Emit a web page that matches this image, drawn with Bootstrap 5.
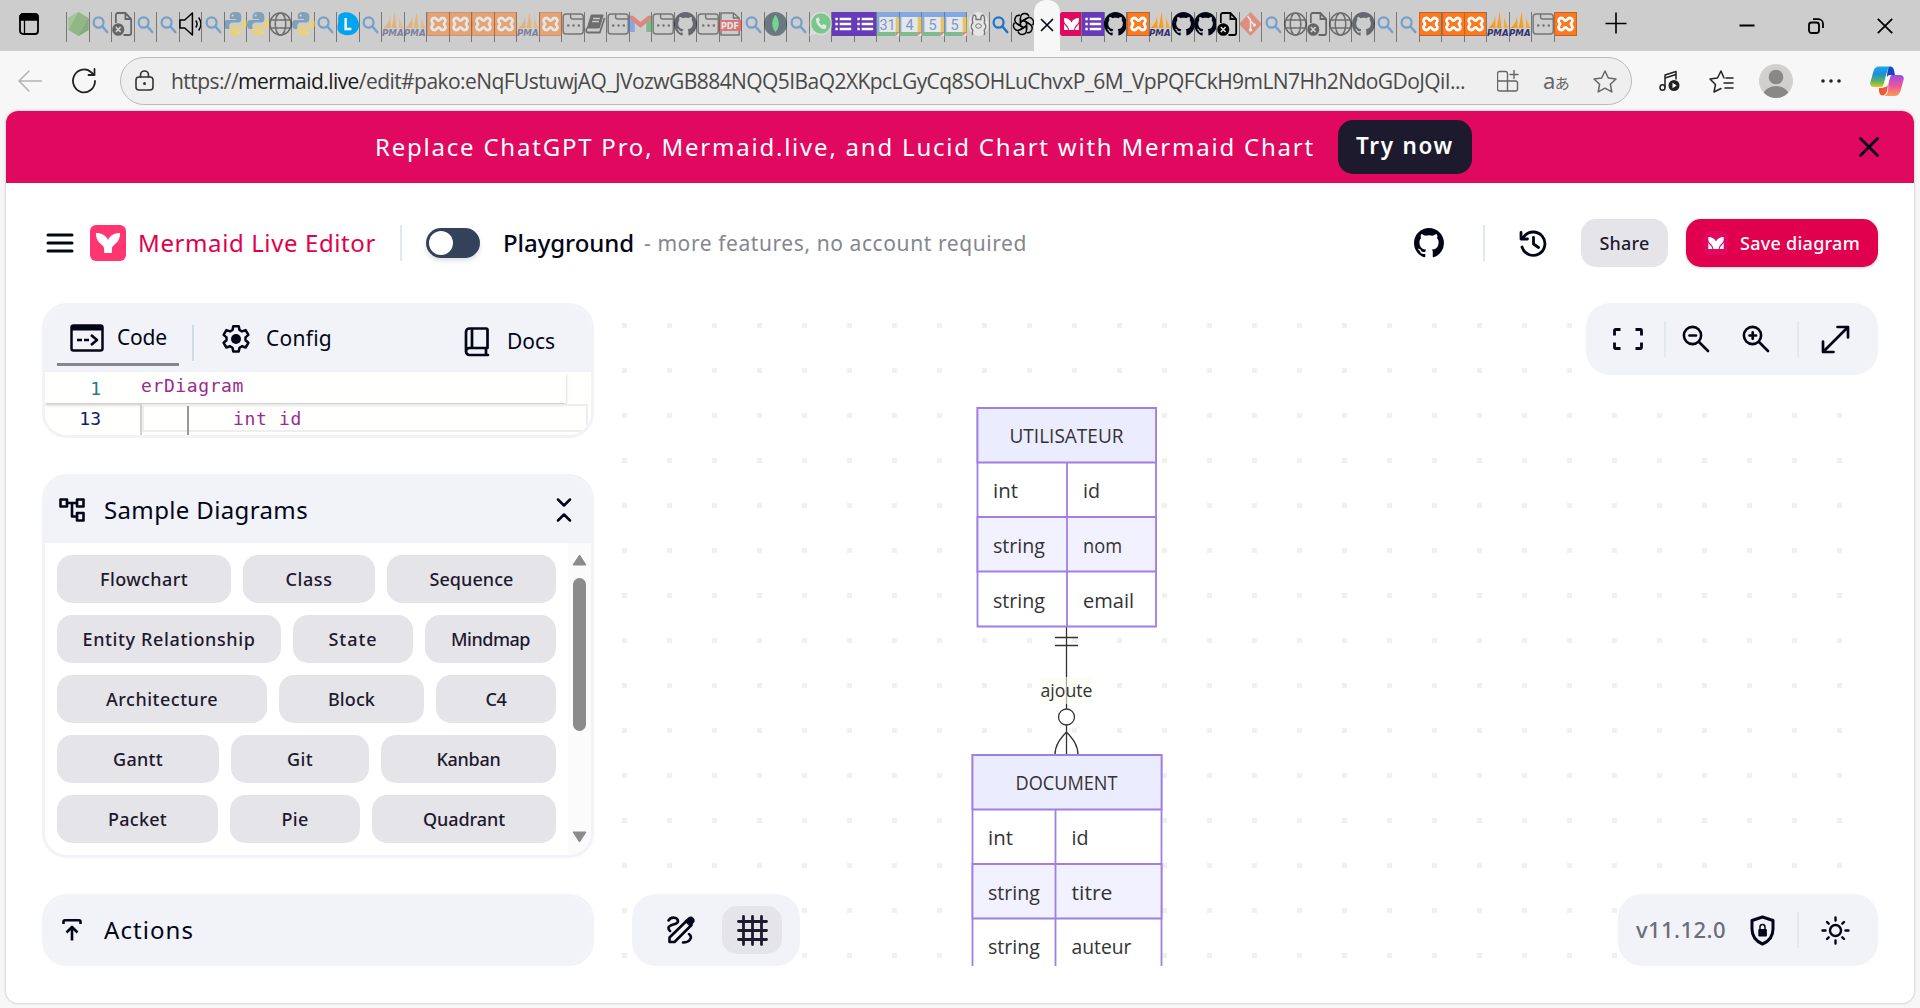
<!DOCTYPE html>
<html lang="en">
<head>
<meta charset="utf-8">
<meta name="viewport" content="width=device-width, initial-scale=1">
<title>Mermaid Live Editor</title>
<link href="https://cdn.jsdelivr.net/npm/bootstrap@5.3.0/dist/css/bootstrap.min.css" rel="stylesheet">
<style>
:root{--ink:#020617;--panel:#f1f3f8;--pink:#e0095f;--brand:#e0004d;--chip:#e5e4e9;--rule:#e2e8f0}
html,body{height:100%;overflow:hidden}
body{background:#f7f7f7;font-family:"Noto Sans",sans-serif;color:var(--ink);line-height:1}
svg{display:block;flex:none}
.ln{fill:none;stroke:currentColor;stroke-linecap:round;stroke-linejoin:round}
.fit{white-space:nowrap;display:inline-block}
.tabstrip{height:51px;background:#cdcdcd;padding-left:19px}
.tabset{height:30px;margin-top:12px}
.tabcell{width:22.5px;height:30px;border-left:1px solid #777;overflow:visible}
.tabcell svg{width:23px;height:24px;margin-left:-.5px}
.tabcell.bare{border-color:transparent;width:21.5px}
.faded{opacity:.5}
.live-tab{width:26px;height:51px;background:#f7f7f7;border-radius:12px 12px 0 0}
.urlrow{height:60px;padding-left:18px}
.urlbox{width:1512px;height:48px;margin-left:23px;border:1.5px solid #bbb;border-radius:24px;background:#efefef;padding:0 14px}
.urltext{font-family:"Open Sans",sans-serif;font-size:21px;color:#4a4a4a;margin-left:17px}
.urltext b{font-weight:400;color:#1b1b1b}
.sheet{width:1908px;height:892px;margin-left:6px;border-radius:12px;background:#fff;overflow:hidden;box-shadow:0 0 3px rgba(0,0,0,.28)}
.promo{height:72px;background:var(--pink);padding:0 35px 0 369px}
.promo-text{font-size:24px;color:#fff}
.promo-btn{width:134px;height:54px;border-radius:15px;background:#1e1a2e;color:#fff;font-size:22.500px;font-weight:600;margin-left:25px;padding-bottom:2px}
.topbar{height:120px;padding:0 36px 0 40px}
.brandname{font-size:24px;color:var(--brand);margin-left:12px}
.vrule{width:2px;height:36px;background:var(--rule)}
.switcher{width:54px;height:30px;border-radius:15px;background:#33425a;padding:3px;box-shadow:0 3px 5px rgba(0,0,0,.12)}
.switcher i{display:block;width:24px;height:24px;border-radius:50%;background:#fff}
.soft-btn{height:48px;border-radius:15px;background:var(--chip);color:#1e1a2e;font-size:18px;font-weight:500;padding-bottom:1px}
.save-btn{width:192px;background:var(--brand);color:#fff;box-shadow:0 1px 3px rgba(0,0,0,.2)}
.work{padding:0 36px;height:663px}
.side{width:552px}
.box{border:3px solid var(--panel);border-radius:25px;overflow:hidden;background:#fff}
.boxhead{background:var(--panel);height:66px}
.tabtext{font-size:21px}
.headtext{font-size:24px}
.code{font-family:"DejaVu Sans Mono","Liberation Mono",monospace;font-size:18px;color:#9c2a8f;background:#fffffd}
.code-sticky{height:31px;box-shadow:0 2px 3px rgba(0,0,0,.22);width:521px}
.num{width:56px;text-align:right;color:#237893}
.cur{height:32px}
.guide{width:2px;background:#d0d0d0;height:32px}
.curbox{border:2px solid #eee;height:28px;width:446px;margin:1px 3px 0 0}
.chips{width:529px;padding:12px}
.chips .soft-btn{flex:none}
.sbar{width:23px;background:#fbfbfb;padding:11px 0 12px}
.thumb{width:13px;height:153px;border-radius:7px;background:#8b8b8b;margin-top:12px}
.canvas{width:1272px;height:663px;margin-left:12px;position:relative;overflow:hidden}
.float-tools{position:absolute;height:72px;border-radius:24px;background:var(--panel)}
.ft-tr{top:0;right:0;width:292px;padding:0 28px 0 27px}
.ft-bl{bottom:0;left:26px;width:168px;padding:0 18px 0 18px}
.ft-br{bottom:0;right:0;width:260px;padding:0 28px 0 18px}
.pressed{width:60px;height:48px;border-radius:15px;background:var(--chip);color:#1e1a2e}
.version{font-size:22px;font-weight:500;color:#6b6d79;padding-bottom:2px}
.er text{font-family:"Open Sans",sans-serif;font-size:19.5px;fill:#333}
</style>
<script src="https://cdn.jsdelivr.net/npm/bootstrap@5.3.0/dist/js/bootstrap.bundle.min.js"></script>
</head>
<body>
<svg class="d-none">
<symbol id="node" viewBox="0 0 24 24"><path d="M12 0 22.500 6v12L12 24 1.500 18V6Z" fill="#5aa047"/><path d="M12 0 1.500 6v12Z" fill="#7cbf5c"/><path d="m22.500 6-10.500 18 10.500-6Z" fill="#3d8a3a"/></symbol>
<symbol id="find" viewBox="0 0 24 24"><circle cx="10" cy="10.500" r="5.200" fill="none" stroke="#1b74cc" stroke-width="2.300"/><path d="m14 14.500 5 5.500" stroke="#1b74cc" stroke-width="2.600" stroke-linecap="round"/></symbol>
<symbol id="docx" viewBox="0 0 24 24"><path d="M4 11V3a2 2 0 0 1 2-2h8l6 6v14a2 2 0 0 1-2 2h-6M14 1v6h6" fill="none" stroke="#000" stroke-width="1.800"/><circle cx="6.500" cy="17.500" r="6.300" fill="#000"/><path d="m4 15 5 5m0-5-5 5" stroke="#ddd" stroke-width="1.700"/></symbol>
<symbol id="speaker" viewBox="0 0 24 24"><path d="M1 8v8h5l8 7V1L6 8Z" fill="none" stroke="#000" stroke-width="1.600" stroke-linejoin="round"/><path d="M17.500 8.500c1.500 2 1.500 5 0 7M20.500 5.500c3 4 3 9 0 13" fill="none" stroke="#000" stroke-width="1.500"/></symbol>
<symbol id="python" viewBox="0 0 24 24"><path d="M12 0C7 0 6 2 6 4v3h6.500v1H3C1 8 0 10 0 12.500S1 17 3 17h2.500v-3c0-2 1.500-3.500 3.500-3.500h6c2 0 3-1.500 3-3V4c0-2.500-2-4-6-4Z" fill="#3776ab"/><path d="M12.500 24c5 0 6-2 6-4v-3H12v-1h9.500c2 0 2.500-2 2.500-4.500S23 7 21 7h-2v3.500c0 2-1.500 3.500-3.500 3.500H9c-2 0-3 1.500-3 3V20c0 2.500 2 4 6.500 4Z" fill="#ffd43b"/><circle cx="9" cy="3.500" r="1.100" fill="#ddd"/><circle cx="15.500" cy="20.500" r="1.100" fill="#ddd"/></symbol>
<symbol id="globe" viewBox="0 0 24 24"><g fill="none" stroke="#111" stroke-width="1.600"><circle cx="12" cy="12" r="11"/><ellipse cx="12" cy="12" rx="5.500" ry="11"/><path d="M2 8h20M2 16h20"/></g></symbol>
<symbol id="ell" viewBox="0 0 24 24"><path d="M3 2C8-1 16 0 20 5s4 11 0 15-10 4-15 2-5-6-4-10S0 4 3 2Z" fill="#00a4ef"/><path d="M9 6v11h6" fill="none" stroke="#fff" stroke-width="2.500"/></symbol>
<symbol id="pma" viewBox="0 0 24 24"><path d="M8.500 4C8 9 5.500 13 1.500 16H9ZM13 0c-1 6-1.500 11-3 16h5Z" fill="#f89c1c"/><path d="M14 1c1 5 1 10 1.500 15h2L18 5c1 4 2.500 8 4.500 11h-7" fill="#fba93a"/><text x="0" y="23.500" font-family="DejaVu Sans" font-size="9" font-weight="bold" font-style="italic" fill="#33306e" textLength="22.500" lengthAdjust="spacingAndGlyphs">PMA</text></symbol>
<symbol id="xampp" viewBox="0 0 24 24"><rect width="24" height="24" rx="1" fill="#f97a20"/><rect width="24" height="24" rx="1" fill="none" stroke="#b95a18" stroke-width="1.400"/><path d="M8 6C5 6 3.800 8.500 5.500 10.500c1 1 1 2 0 3C3.800 15.500 5 18 8 18c2.200 0 2-2.500 4-2.500s1.800 2.500 4 2.500c3 0 4.200-2.500 2.500-4.500-1-1-1-2 0-3C20.200 8.500 19 6 16 6c-2.200 0-2 2.500-4 2.500S10.200 6 8 6Z" fill="none" stroke="#fff" stroke-width="2.800"/></symbol>
<symbol id="page" viewBox="0 0 24 24"><rect x="1.200" y="2" width="21" height="20" rx="3" fill="none" stroke="#222" stroke-width="1.500"/><path d="M9 2v3c0 1.500 1 2 2 2h11" fill="none" stroke="#222" stroke-width="1.500"/><path d="M6.500 13.500h.1M12 13.500h.1M17.500 13.500h.1" stroke="#222" stroke-width="2.600" stroke-linecap="round"/></symbol>
<symbol id="book" viewBox="0 0 24 24"><path d="M7.500 3H20l-4 13H3.500Z" fill="#111" stroke="#111" stroke-linejoin="round"/><path d="M9.500 6.500h7M8.500 9.500h7" stroke="#ccc" stroke-width="1.300"/><path d="M3.500 16c-2 1-1.500 4.500.5 4.500h12.500L21.500 6" fill="none" stroke="#111" stroke-width="1.800"/></symbol>
<symbol id="gmail" viewBox="0 0 24 24"><path d="M0 6v14h6V10Z" fill="#4285f4"/><path d="M24 6v14h-6V10Z" fill="#34a853"/><path d="M0 6c0-3 3-3 4.500-2L12 10l7.500-6c2-1.500 4.500 0 4.500 2l-12 10Z" fill="#ea4335"/></symbol>
<symbol id="gh" viewBox="0 0 16 16"><path fill="currentColor" d="M8 0C3.580 0 0 3.580 0 8c0 3.540 2.290 6.530 5.470 7.590.4.070.55-.17.55-.38 0-.19-.01-.82-.01-1.490-2.010.37-2.530-.49-2.690-.94-.09-.23-.48-.94-.82-1.130-.28-.15-.68-.52-.01-.53.63-.01 1.080.58 1.230.82.72 1.210 1.870.87 2.330.66.07-.52.28-.87.51-1.070-1.780-.2-3.640-.89-3.640-3.950 0-.87.31-1.590.82-2.150-.08-.2-.36-1.020.08-2.120 0 0 .67-.21 2.200.82.64-.18 1.320-.27 2-.27s1.360.09 2 .27c1.530-1.040 2.200-.82 2.200-.82.44 1.100.16 1.920.08 2.120.51.56.82 1.270.82 2.150 0 3.070-1.870 3.750-3.650 3.950.29.25.54.73.54 1.480 0 1.070-.01 1.930-.01 2.200 0 .21.15.46.55.38A8.010 8.010 0 0 0 16 8c0-4.420-3.580-8-8-8Z"/></symbol>
<symbol id="pdf" viewBox="0 0 24 24"><path d="M2 8V1h13l6 5v2M15 1v5h6M2 19v4h19v-4" fill="none" stroke="#222" stroke-width="1.500"/><rect y="8" width="24" height="11" fill="#e5252a"/><text x="2" y="17" font-family="DejaVu Sans" font-size="9" font-weight="bold" fill="#fff" textLength="19" lengthAdjust="spacingAndGlyphs">PDF</text></symbol>
<symbol id="mongo" viewBox="0 0 24 24"><circle cx="12" cy="12" r="12" fill="#0c2733"/><path d="M12 3c5 6 4 13 0 17-4-4-5-11 0-17Z" fill="#13e25b"/></symbol>
<symbol id="wapp" viewBox="0 0 24 24"><circle cx="12.500" cy="11.500" r="11" fill="#25c44d" stroke="#eee" stroke-width="1.500"/><path d="m0 24 2-7 5 5Z" fill="#eee"/><path d="M8 6c-3 4 4 12 9 11l1.500-3-3-2-2 1.500-3.500-3.500L11.500 8 10 5.500Z" fill="#fff"/></symbol>
<symbol id="forms" viewBox="0 0 24 24"><rect width="24" height="24" fill="#673ab7"/><path d="M3.500 7h2.500M3.500 12h2.500M3.500 17h2.500M8 7h12M8 12h12M8 17h12" stroke="#fff" stroke-width="2.500"/></symbol>
<symbol id="cal" viewBox="0 0 24 24"><rect width="24" height="24" fill="#fff"/><path d="M0 0h24v5H0Z" fill="#4285f4"/><path d="M0 5h2.500v15H0Z" fill="#4285f4"/><path d="M19.500 5H24v15h-4.500Z" fill="#fbbc04"/><path d="M0 20h19.500v4H0Z" fill="#34a853"/><path d="M19.500 20H24l-4.500 4Z" fill="#ea4335"/></symbol>
<symbol id="llama" viewBox="0 0 24 24"><rect x="2" y="0" width="20" height="24" rx="10" fill="#fff"/><path d="M6 23c-1-3 0-4 0-5-2-2-2-5 0-7-1-4 0-8 1.500-8S9.500 6 9.500 7.500h5C14.500 6 15 3 16.500 3S19 7 18 11c2 2 2 5 0 7 0 1 1 2 0 5" fill="none" stroke="#222" stroke-width="1.500"/><ellipse cx="12" cy="14" rx="3" ry="2.200" fill="none" stroke="#222"/></symbol>
<symbol id="ai" viewBox="0 0 24 24"><g fill="none" stroke="#000" stroke-width="1.500"><path id="lp" d="M8.800 13.500V6.500c0-6 7.200-6.500 9-2M8.800 10.200l6.500-3.800"/><use href="#lp" transform="rotate(60 12 12)"/><use href="#lp" transform="rotate(120 12 12)"/><use href="#lp" transform="rotate(180 12 12)"/><use href="#lp" transform="rotate(240 12 12)"/><use href="#lp" transform="rotate(300 12 12)"/></g></symbol>
<symbol id="mchart" viewBox="0 0 24 24"><path d="M4.300 6c3.500 0 6.500 1.700 7.700 4.500C13.200 7.700 16.200 6 19.700 6v12H4.300Z" fill="#fff"/><path d="M3.800 9.500c.8 4.200 5.200 3.500 5.200 9M20.200 9.500c-.8 4.200-5.200 3.500-5.200 9" fill="none" stroke="#e0095f" stroke-width="1.200"/></symbol>
<symbol id="mtab" viewBox="0 0 24 24"><rect width="24" height="24" rx="3" fill="#e0095f"/><use href="#mchart"/></symbol>
<symbol id="git" viewBox="0 0 24 24"><path d="m12 0 12 12-12 12L0 12Z" fill="#f05033"/><path d="m9 4 3 4v10M12 9l4 4" fill="none" stroke="#fff" stroke-width="1.700"/><circle cx="12" cy="18" r="1.800" fill="#fff"/><circle cx="16" cy="13" r="1.800" fill="#fff"/></symbol>
</svg>

<header class="tabstrip d-flex align-items-start">
  <svg width="20" height="22" viewBox="0 0 20 22" style="margin-top:13px"><rect x="1" y="1" width="18" height="20" rx="3" fill="none" stroke="#000" stroke-width="1.800"/><path d="M1 3.500A2.500 2.500 0 0 1 3.500 1h13A2.500 2.500 0 0 1 19 3.500V7H1ZM5.500 7v14" stroke="#000" stroke-width="1.300"/></svg>
  <div class="tabset d-flex" id="tabsA" style="margin-left:27px"></div>
  <div class="live-tab d-flex justify-content-center"><svg width="14" height="14" viewBox="0 0 14 14" style="margin-top:18px"><path class="ln" d="m1.500 1.500 11 11m0-11-11 11" stroke-width="1.700"/></svg></div>
  <div class="tabset d-flex" id="tabsB"></div>
  <svg width="22" height="22" viewBox="0 0 22 22" style="margin:12px 0 0 29px"><path d="M11 .5v21M.5 11.500h21" stroke="#000" stroke-width="1.600"/></svg>
  <div class="ms-auto d-flex" style="margin:18px 27px 0 0;gap:53px">
    <svg width="16" height="16"><path d="M.5 7.500h15" stroke="#000" stroke-width="2"/></svg>
    <svg width="16" height="16" viewBox="0 0 16 16" fill="none" stroke="#000" stroke-width="1.800"><rect x="1" y="4.500" width="10" height="10.500" rx="2.500"/><path d="M5 1.200h5.500a4.500 4.500 0 0 1 4.500 4.500V10"/></svg>
    <svg width="16" height="16" viewBox="0 0 16 16"><path d="m.8.800 14.400 14.400M15.200.8.800 15.200" stroke="#000" stroke-width="1.800"/></svg>
  </div>
</header>

<div class="urlrow d-flex align-items-center">
  <svg width="24" height="22" viewBox="0 0 24 22" style="color:#b4b4b4"><path class="ln" d="M23.500 11H1M11 1 1 11l10 10" stroke-width="1.500"/></svg>
  <svg width="26" height="26" viewBox="0 0 26 26" style="color:#222;margin-left:29px"><path class="ln" d="M24 13a11 11.500 0 1 1-3.500-8.500L23 7M23.500 1v6h-6" stroke-width="1.800"/></svg>
  <div class="urlbox d-flex align-items-center">
    <svg width="19" height="21" viewBox="0 0 19 21" style="color:#333;margin-top:-2px"><rect class="ln" x="1" y="7" width="17" height="13" rx="3" stroke-width="1.600"/><path class="ln" d="M5.500 7V5a4 4 0 0 1 8 0v2" stroke-width="1.600"/><circle cx="9.500" cy="13.500" r="1.500" fill="currentColor"/></svg>
    <span class="urltext fit" data-w="1294">https://<b>mermaid.live</b>/edit#pako:eNqFUstuwjAQ_JVozwGB884NQQ5IBaQ2XKpcLGyCq8SOHLuChvxP_6M_VpPQFCkH9mLN7Hh2NdoGDoJQiI...</span>
    <div class="ms-auto d-flex align-items-center" style="color:#666;gap:24px">
      <svg width="22" height="22" viewBox="0 0 22 22"><path class="ln" d="M10.500 21V3.500a2 2 0 0 0-2-2h-6a2 2 0 0 0-2 2V19a2 2 0 0 0 2 2h16a2 2 0 0 0 2-2v-6a2 2 0 0 0-2-2H.5M17 .5v8M13 4.500h8" stroke-width="1.400"/></svg>
      <span style="font:22px/1 'Noto Sans','Noto Sans CJK JP',sans-serif;letter-spacing:-.5px;width:26px;white-space:nowrap;padding-bottom:3px">a<small style="font-size:15px">あ</small></span>
      <svg width="24" height="23" viewBox="0 0 24 23"><path class="ln" d="m12 1 3.300 7 7.700 1-5.600 5.300 1.400 7.600L12 18.200l-6.800 3.700 1.400-7.600L1 9l7.700-1Z" stroke-width="1.500"/></svg>
    </div>
  </div>
  <div class="d-flex align-items-center flex-grow-1" style="padding-left:27px;color:#222">
    <svg width="22" height="22" viewBox="0 0 22 22"><path class="ln" d="M6 17V5l11-3.500V9M6 8l11-3.500" stroke-width="1.500"/><ellipse class="ln" cx="3.500" cy="17.500" rx="2.500" ry="2.800" stroke-width="1.500"/><circle cx="15" cy="15.500" r="5.500" fill="currentColor"/><path d="M13.500 12.800v5.400l4.200-2.700Z" fill="#fff"/></svg>
    <svg width="25" height="23" viewBox="0 0 25 23" style="margin-left:28px"><path class="ln" d="M15 8 12 1 8.500 8 1 9l5.500 5.500L5 22l7-3.500M17 8h7M15 13h9M16 18h8" stroke-width="1.500"/></svg>
    <svg width="34" height="34" viewBox="0 0 34 34" style="margin-left:25px"><defs><clipPath id="av"><circle cx="17" cy="17" r="17"/></clipPath></defs><g clip-path="url(#av)"><path fill="#d2d0ce" d="M0 0h34v34H0z"/><circle cx="17" cy="13" r="7.300" fill="#8a8886"/><ellipse cx="17" cy="32" rx="13" ry="10" fill="#8a8886"/></g></svg>
    <svg width="20" height="6" viewBox="0 0 20 6" style="margin-left:28px"><path d="M2 3h.01M10 3h.01M18 3h.01" stroke="#222" stroke-width="3.600" stroke-linecap="round"/></svg>
    <svg width="34" height="31" viewBox="0 0 34 31" style="margin-left:29px"><defs><linearGradient id="c1" x2="0" y2="1"><stop stop-color="#1ba7e8"/><stop offset=".35" stop-color="#1c8fd8"/><stop offset=".7" stop-color="#58b560"/><stop offset="1" stop-color="#f5c518"/></linearGradient><linearGradient id="c2" x2="0" y2="1"><stop stop-color="#a04bea"/><stop offset=".5" stop-color="#e8559f"/><stop offset="1" stop-color="#ff9a52"/></linearGradient></defs><path d="M19 9h11c3 0 4.500 2 3.500 5l-3 11c-1 3-3 5-6 5H13c3 0 4-2 5-5Z" fill="url(#c2)"/><path d="M15 21H4c-3 0-4.500-2-3.500-5l3-11C4.500 2 6 .5 9 .5h13c-3 0-4 2-5 5l-3.500 13c-.5 2-2 3-3.500 3" fill="url(#c1)"/><path d="M9 22h4l5-3-1 6c-1.500 5-7 7-8 0Z" fill="#ee5a35"/><path d="M20 .5c4 0 4 4 5 8.500h-4c-3 0-3 1-4 3 0-6 1-10.500 3-11.500Z" fill="#1746c5"/><path d="m14 21 3-9c1-3 2-3 4-3l-3 9c-1 3-2 3-4 3Z" fill="#fff"/></svg>
  </div>
</div>

<main class="sheet">
  <div class="promo d-flex align-items-center">
    <span class="promo-text fit" data-w="940">Replace ChatGPT Pro, Mermaid.live, and Lucid Chart with Mermaid Chart</span>
    <a class="promo-btn d-flex align-items-center justify-content-center text-decoration-none" style="margin-left:23px"><span class="fit" data-w="98">Try now</span></a>
    <svg class="ms-auto" width="20" height="20" viewBox="0 0 20 20"><path class="ln" d="m1.500 1.500 17 17m0-17-17 17" stroke-width="2.800"/></svg>
  </div>

  <nav class="topbar d-flex align-items-center">
    <svg width="28" height="20" viewBox="0 0 28 20"><path class="ln" d="M2 2h24M2 10h24M2 18h24" stroke-width="3"/></svg>
    <svg width="36" height="36" viewBox="0 0 24 24" style="margin-left:16px"><rect width="24" height="24" rx="4" fill="#ff3670"/><path d="M4 5.400c4 0 7 1.800 8 4.800 1-3 4-4.800 8-4.800.1 3-1 6-3.800 7.800-1.100.8-1.600 1.600-1.600 2.900v2.500H9.400v-2.500c0-1.300-.5-2.100-1.600-2.900C5 11.400 3.900 8.400 4 5.400Z" fill="#fff"/></svg>
    <span class="brandname fit" data-w="238">Mermaid Live Editor</span>
    <div class="vrule" style="margin:0 24px 0 24px"></div>
    <div class="switcher"><i></i></div>
    <span class="headtext fit" data-w="131" style="margin-left:23px;font-weight:500;padding-bottom:1px">Playground</span>
    <span class="fit" data-w="383" style="font-size:21px;color:#85868f;margin-left:10px">- more features, no account required</span>
    <svg width="30" height="30" class="ms-auto"><use href="#gh"/></svg>
    <div class="vrule" style="margin:0 34px 0 39px"></div>
    <svg width="29" height="29" viewBox="0 0 29 29"><path class="ln" d="M3 18a11.700 11.700 0 1 0 2-10.500L2.500 10M2 3.500V10h6.500M14.500 8.500v6.500l5 3.500" stroke-width="2.800" stroke-linecap="butt"/></svg>
    <a class="soft-btn d-flex align-items-center justify-content-center text-decoration-none" style="width:87px;margin:0 18px 0 33px"><span class="fit" data-w="50">Share</span></a>
    <a class="soft-btn save-btn d-flex align-items-center text-decoration-none" style="padding-left:18px;gap:12px"><svg width="24" height="24"><rect width="24" height="24" rx="5" fill="#e0095f"/><use href="#mchart"/></svg><span class="fit" data-w="120">Save diagram</span></a>
  </nav>

  <div class="work d-flex">
    <aside class="side d-flex flex-column">
      <section class="box" style="height:135px">
        <div class="boxhead d-flex align-items-start">
          <div class="d-flex" style="width:122px;height:60px;margin-left:12px;border-bottom:3px solid #85868f;padding:18px 0 0 13px">
            <svg width="34" height="28" viewBox="0 0 34 28"><rect class="ln" x="1.500" y="1.500" width="31" height="25" rx="2" stroke-width="2.500"/><path d="M1 1h32v5.500H1Z" fill="currentColor"/><path class="ln" d="M7 16h5M14 16h5M21 11l6 5-6 5" stroke-width="2.600" style="stroke-linecap:butt"/></svg>
            <span class="tabtext fit" data-w="50" style="margin:3px 0 0 13px">Code</span>
          </div>
          <div class="vrule" style="margin:19px 0 0 13px;background:#cfdce8"></div>
          <svg width="30" height="30" viewBox="0 0 24 24" style="margin:18px 0 0 27px"><path class="ln" d="M9.800 1.500h4.400l.6 3 2 1.100 2.900-1 2.200 3.800-2.300 2v2.300l2.300 2-2.200 3.800-2.900-1-2 1.200-.6 3H9.800l-.6-3-2-1.200-2.900 1-2.200-3.800 2.300-2v-2.300l-2.300-2 2.200-3.800 2.900 1 2-1.100Z" transform="translate(0 .3)" stroke-width="2"/><circle cx="12" cy="12" r="4" fill="currentColor"/></svg>
          <span class="tabtext fit" data-w="66" style="margin:22px 0 0 15px">Config</span>
          <svg width="26" height="30" viewBox="0 0 26 30" style="margin:21px 0 0 132px"><path class="ln" d="M24 28H5.500A3.500 3.500 0 0 1 2 24.500V5a3.500 3.500 0 0 1 3.500-3.500H22A1.500 1.500 0 0 1 23.500 3v18H5.500A3.500 3.500 0 0 0 2 24.500M8 1.500V21M22 21.500V28" stroke-width="2.700"/></svg>
          <span class="tabtext fit" data-w="48" style="margin:25px 0 0 17px">Docs</span>
        </div>
        <div class="code">
          <div class="code-sticky d-flex align-items-start"><span class="num" style="padding-top:8px">1</span><span class="fit" data-w="103" style="margin:5px 0 0 40px">erDiagram</span></div>
          <div class="cur d-flex"><span class="num" style="color:#0b216f;padding-top:7px">13</span><div class="guide" style="margin-left:39px"></div><div class="curbox d-flex"><div class="guide" style="background:#999;margin-left:43px;flex:none"></div><span class="fit" data-w="69" style="margin:4px 0 0 44px">int id</span></div></div>
        </div>
      </section>

      <section class="box" style="height:384px;margin-top:36px">
        <div class="boxhead d-flex align-items-center" style="padding:0 19px 0 14px">
          <svg width="26" height="24" viewBox="0 0 26 24"><g class="ln" stroke-width="2.600"><rect x="1.500" y="1.500" width="6.500" height="7"/><rect x="18" y="1.500" width="6.500" height="7"/><rect x="18" y="15" width="6.500" height="7.500"/><path d="M8 5h10M13 5v13.500h5"/></g></svg>
          <span class="headtext fit" data-w="204" style="margin-left:19px;padding-bottom:1px">Sample Diagrams</span>
          <svg class="ms-auto" width="16" height="24" viewBox="0 0 16 24"><path class="ln" d="m2 1.500 6 6 6-6M2 22.500l6-6 6 6" stroke-width="2.500"/></svg>
        </div>
        <div class="d-flex" style="height:312px">
          <div class="chips d-flex flex-wrap align-content-start" id="chips" style="gap:12px"></div>
          <div class="sbar d-flex flex-column align-items-center">
            <svg width="15" height="12"><path d="M7.500 1 14 11H1Z" fill="#8b8b8b" stroke="#8b8b8b" stroke-linejoin="round"/></svg>
            <div class="thumb"></div>
            <svg class="mt-auto" width="15" height="12"><path d="M7.500 11 14 1H1Z" fill="#8b8b8b" stroke="#8b8b8b" stroke-linejoin="round"/></svg>
          </div>
        </div>
      </section>

      <section class="box" style="height:72px;margin-top:36px">
        <div class="boxhead d-flex align-items-center" style="padding-left:17px">
          <svg width="20" height="24" viewBox="0 0 20 24"><path class="ln" d="M1.500 6V3.500a1.200 1.200 0 0 1 1.200-1.200h14.600a1.200 1.200 0 0 1 1.200 1.200V6M10 22.500V9.500M4.500 14.500 10 9l5.500 5.500" stroke-width="2.600" style="stroke-linecap:butt"/></svg>
          <span class="headtext fit" data-w="90" style="margin-left:22px;padding-bottom:1px">Actions</span>
        </div>
      </section>
    </aside>

    <section class="canvas">
      <!-- viewBox is the canvas area of the page -->
      <svg class="er" width="1272" height="663" viewBox="606 303 1272 663">
        <defs><pattern id="dots" x="622" y="323" width="45" height="45" patternUnits="userSpaceOnUse"><rect width="5" height="5" fill="#f0f0f0"/></pattern></defs>
        <rect x="606" y="303" width="1272" height="663" fill="url(#dots)"/>
        <g stroke="#333" stroke-width="1.300" fill="none"><path d="M1066.500 626v83M1066.500 725v30M1055 637.500h23M1055 645.500h23M1055 755c0-10 5-16 11.500-23 6.500 7 11.500 13 11.500 23"/><circle cx="1066.500" cy="717" r="8" fill="#fff"/></g>
        <rect x="1040" y="677" width="52" height="27" fill="#fbfff2" opacity=".6"/>
        <text x="1040.500" y="697" textLength="52" lengthAdjust="spacingAndGlyphs" style="font-size:17.500px">ajoute</text>
        <g stroke="#9f7fe3" stroke-width="1.800">
          <path fill="#fff" d="M977.500 408h178.500v218.500H977.500Z"/><path fill="#ececff" d="M977.500 408h178.500v54.500H977.500Z"/><path fill="#f2f1ff" d="M977.500 517h178.500v54.500H977.500Z"/><path d="M1067 462v164"/>
          <path fill="#fff" d="M972.500 755h189v230h-189Z"/><path fill="#ececff" d="M972.500 755h189v54.500h-189Z"/><path fill="#f2f1ff" d="M972.500 864h189v54.500h-189Z"/><path d="M1055.500 809.500V990"/>
        </g>
        <g>
          <text x="1009.500" y="443" textLength="114" lengthAdjust="spacingAndGlyphs">UTILISATEUR</text>
          <text x="993" y="498" textLength="25" lengthAdjust="spacingAndGlyphs">int</text><text x="1083" y="498" textLength="17" lengthAdjust="spacingAndGlyphs">id</text>
          <text x="993" y="552.500" textLength="52" lengthAdjust="spacingAndGlyphs">string</text><text x="1083" y="552.500" textLength="39" lengthAdjust="spacingAndGlyphs">nom</text>
          <text x="993" y="607.500" textLength="52" lengthAdjust="spacingAndGlyphs">string</text><text x="1083" y="607.500" textLength="51" lengthAdjust="spacingAndGlyphs">email</text>
          <text x="1015.500" y="790" textLength="102" lengthAdjust="spacingAndGlyphs">DOCUMENT</text>
          <text x="988" y="844.500" textLength="25" lengthAdjust="spacingAndGlyphs">int</text><text x="1071.500" y="844.500" textLength="17" lengthAdjust="spacingAndGlyphs">id</text>
          <text x="988" y="899.500" textLength="52" lengthAdjust="spacingAndGlyphs">string</text><text x="1071.500" y="899.500" textLength="41" lengthAdjust="spacingAndGlyphs">titre</text>
          <text x="988" y="953.500" textLength="52" lengthAdjust="spacingAndGlyphs">string</text><text x="1071.500" y="953.500" textLength="60" lengthAdjust="spacingAndGlyphs">auteur</text>
        </g>
      </svg>
      <div class="float-tools ft-tr d-flex align-items-center">
        <svg width="30" height="22" viewBox="0 0 30 22"><path class="ln" d="M1.500 7.500v-5a1 1 0 0 1 1-1h5M22.500 1.500h5a1 1 0 0 1 1 1v5M28.500 14.500v5a1 1 0 0 1-1 1h-5M7.500 20.500h-5a1 1 0 0 1-1-1v-5" stroke-width="2.800" style="stroke-linecap:butt"/></svg>
        <div class="vrule" style="margin:0 16px 0 21px"></div>
        <svg width="28" height="28" viewBox="0 0 28 28"><circle class="ln" cx="10.500" cy="10.500" r="8.600" stroke-width="2.600"/><path class="ln" d="m17 17 9 9M7.500 10.500h6.500" stroke-width="2.700"/></svg>
        <svg width="28" height="28" viewBox="0 0 28 28" style="margin-left:32px"><circle class="ln" cx="10.500" cy="10.500" r="8.600" stroke-width="2.600"/><path class="ln" d="m17 17 9 9M7.500 10.500h6.500M10.700 7.300v6.500" stroke-width="2.700"/></svg>
        <div class="vrule ms-auto" style="margin-right:22px"></div>
        <svg width="29" height="29" viewBox="0 0 29 29"><path class="ln" d="M2 27 27 2M16.500 2H27v10.500M2 16.500V27h10.500" stroke-width="2.700"/></svg>
      </div>
      <div class="float-tools ft-bl d-flex align-items-center justify-content-between">
        <svg width="29" height="28" viewBox="0 0 29 28" style="margin-left:17px"><path class="ln" d="M2.500 26v-4.500L20 4.500l4.500 4.500L7.500 26Z" stroke-width="2.600"/><path d="m17.500 5 4-3.700c3-2.500 8 2.200 5.500 5.200L23 11Z" fill="currentColor"/><path class="ln" d="M1.500 4.500C4 .5 10.500.8 11 5c.3 4-8.500 3-9.500 6.500-.2 1.500.3 2.500 1.500 3.500M22 18c4 3 1 8.500-6 8.500" stroke-width="2.600"/></svg>
        <div class="pressed d-flex align-items-center justify-content-center"><svg width="31" height="31" viewBox="0 0 31 31"><path class="ln" d="M6.500 1.500v28M15.500 1.500v28M24.500 1.500v28M1.500 6.500h28M1.500 15.500h28M1.500 24.500h28" stroke-width="2.800"/></svg></div>
      </div>
      <div class="float-tools ft-br d-flex align-items-center">
        <span class="version fit" data-w="90">v11.12.0</span>
        <svg width="25" height="31" viewBox="0 0 25 31" style="margin-left:24px"><path class="ln" d="M12.500 2 2 5.500v8.500c0 7.500 4.500 12.500 10.500 15 6-2.500 10.500-7.500 10.500-15V5.500Z" stroke-width="3"/><rect x="8.300" y="14" width="8.600" height="7.500" rx="1" fill="currentColor"/><path class="ln" d="M10 14v-2a2.500 2.500 0 0 1 5 0v2" stroke-width="1.500"/></svg>
        <div class="vrule ms-auto" style="margin-right:22px"></div>
        <svg width="29" height="29" viewBox="0 0 29 29"><circle class="ln" cx="14.500" cy="14.500" r="5.500" stroke-width="2.400"/><path class="ln" d="M14.500 1.500v3M14.500 24.500v3M1.500 14.500h3M24.500 14.500h3M6 6l1.700 1.700M21.300 21.300 23 23M6 23l1.700-1.700M21.300 7.700 23 6" stroke-width="2.400"/></svg>
      </div>
    </section>
  </div>
</main>

<script>
const cell=n=>{
  let soft=n[0]==='~',id=n.replace(/^~/,''),day='';
  if(/^cal/.test(id)){day=id.slice(3);id='cal'}
  const t=day?`<text x="11" y="18" text-anchor="middle" font-size="15" font-family="Roboto" fill="#1967d2">${day}</text>`:'';
  return `<div class="tabcell${id==='mtab'?' bare':''}"><svg viewBox="0 0 24 24" preserveAspectRatio="none" class="${soft?'faded':''}"><use href="#${id}"/>${t}</svg></div>`};
tabsA.innerHTML='~node ~find ~docx ~find ~find speaker ~find ~python ~python ~globe ~python ~find ell ~find ~pma ~pma ~xampp ~xampp ~xampp ~xampp ~pma ~xampp ~page ~book ~page ~gmail ~page ~gh ~page ~pdf ~find ~mongo ~find ~wapp forms forms ~cal31 ~cal4 ~cal5 ~cal5 ~llama find ai'.split(' ').map(cell).join('');
tabsB.innerHTML='mtab forms gh xampp pma gh gh docx ~git ~find ~globe ~docx ~globe ~gh ~find ~find xampp xampp xampp pma pma ~page xampp'.split(' ').map(cell).join('');
const samples=[['Flowchart',174,88],['Class',132,47],['Sequence',169,84],['Entity Relationship',224,173],['State',120,49],['Mindmap',131,79],['Architecture',210,112],['Block',145,47],['C4',120,21],['Gantt',162,50],['Git',138,26],['Kanban',175,64],['Packet',161,59],['Pie',130,27],['Quadrant',184,82]];
chips.innerHTML=samples.map(([n,w,t])=>`<a class="soft-btn d-flex align-items-center justify-content-center text-decoration-none" style="width:${w}px"><span class="fit" data-w="${t}">${n}</span></a>`).join('');
// letter spacing so every label takes its design width
document.querySelectorAll('.fit').forEach(e=>{
  const w=e.getBoundingClientRect().width,n=e.textContent.length;
  e.style.letterSpacing=((e.dataset.w-w)/n).toFixed(3)+'px';
});
</script>
</body>
</html>
